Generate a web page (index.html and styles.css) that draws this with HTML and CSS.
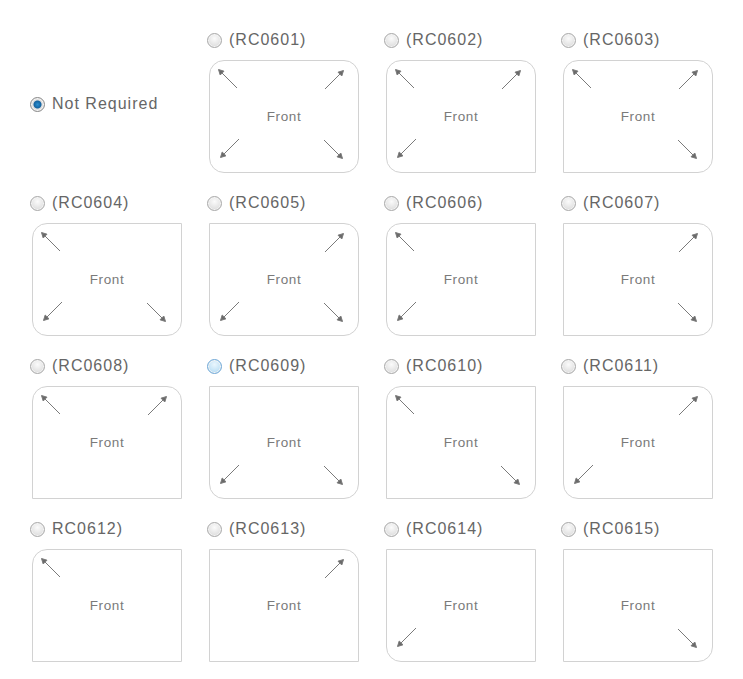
FILE: index.html
```html
<!DOCTYPE html>
<html lang="en">
<head>
    <meta charset="UTF-8">
    <title>Corner Options</title>
    <link rel="stylesheet" href="styles.css">
</head>
<body>
    <svg width="0" height="0" class="defs">
        <defs>
            <g id="arrow">
                <line x1="3" y1="3" x2="20" y2="20" />
                <polygon points="1.5,1.5 7,3.2 3.2,7" />
            </g>
        </defs>
    </svg>

    <div class="grid">
        <label class="option none">
            <input type="radio" name="corner" checked>
            <span>Not Required</span>
        </label>

        <div class="option">
            <label class="pick"><input type="radio" name="corner"><span>(RC0601)</span></label>
            <div class="card tl tr bl br">
                <svg class="arr a-tl"><use href="#arrow"/></svg>
                <svg class="arr a-tr"><use href="#arrow"/></svg>
                <svg class="arr a-bl"><use href="#arrow"/></svg>
                <svg class="arr a-br"><use href="#arrow"/></svg>
                Front
            </div>
        </div>

        <div class="option">
            <label class="pick"><input type="radio" name="corner"><span>(RC0602)</span></label>
            <div class="card tl tr bl">
                <svg class="arr a-tl"><use href="#arrow"/></svg>
                <svg class="arr a-tr"><use href="#arrow"/></svg>
                <svg class="arr a-bl"><use href="#arrow"/></svg>
                Front
            </div>
        </div>

        <div class="option">
            <label class="pick"><input type="radio" name="corner"><span>(RC0603)</span></label>
            <div class="card tl tr br">
                <svg class="arr a-tl"><use href="#arrow"/></svg>
                <svg class="arr a-tr"><use href="#arrow"/></svg>
                <svg class="arr a-br"><use href="#arrow"/></svg>
                Front
            </div>
        </div>

        <div class="option">
            <label class="pick"><input type="radio" name="corner"><span>(RC0604)</span></label>
            <div class="card tl bl br">
                <svg class="arr a-tl"><use href="#arrow"/></svg>
                <svg class="arr a-bl"><use href="#arrow"/></svg>
                <svg class="arr a-br"><use href="#arrow"/></svg>
                Front
            </div>
        </div>

        <div class="option">
            <label class="pick"><input type="radio" name="corner"><span>(RC0605)</span></label>
            <div class="card tr bl br">
                <svg class="arr a-tr"><use href="#arrow"/></svg>
                <svg class="arr a-bl"><use href="#arrow"/></svg>
                <svg class="arr a-br"><use href="#arrow"/></svg>
                Front
            </div>
        </div>

        <div class="option">
            <label class="pick"><input type="radio" name="corner"><span>(RC0606)</span></label>
            <div class="card tl bl">
                <svg class="arr a-tl"><use href="#arrow"/></svg>
                <svg class="arr a-bl"><use href="#arrow"/></svg>
                Front
            </div>
        </div>

        <div class="option">
            <label class="pick"><input type="radio" name="corner"><span>(RC0607)</span></label>
            <div class="card tr br">
                <svg class="arr a-tr"><use href="#arrow"/></svg>
                <svg class="arr a-br"><use href="#arrow"/></svg>
                Front
            </div>
        </div>

        <div class="option">
            <label class="pick"><input type="radio" name="corner"><span>(RC0608)</span></label>
            <div class="card tl tr">
                <svg class="arr a-tl"><use href="#arrow"/></svg>
                <svg class="arr a-tr"><use href="#arrow"/></svg>
                Front
            </div>
        </div>

        <div class="option">
            <label class="pick"><input type="radio" name="corner" class="hover"><span>(RC0609)</span></label>
            <div class="card bl br">
                <svg class="arr a-bl"><use href="#arrow"/></svg>
                <svg class="arr a-br"><use href="#arrow"/></svg>
                Front
            </div>
        </div>

        <div class="option">
            <label class="pick"><input type="radio" name="corner"><span>(RC0610)</span></label>
            <div class="card tl br">
                <svg class="arr a-tl"><use href="#arrow"/></svg>
                <svg class="arr a-br"><use href="#arrow"/></svg>
                Front
            </div>
        </div>

        <div class="option">
            <label class="pick"><input type="radio" name="corner"><span>(RC0611)</span></label>
            <div class="card tr bl">
                <svg class="arr a-tr"><use href="#arrow"/></svg>
                <svg class="arr a-bl"><use href="#arrow"/></svg>
                Front
            </div>
        </div>

        <div class="option">
            <label class="pick"><input type="radio" name="corner"><span>RC0612)</span></label>
            <div class="card tl">
                <svg class="arr a-tl"><use href="#arrow"/></svg>
                Front
            </div>
        </div>

        <div class="option">
            <label class="pick"><input type="radio" name="corner"><span>(RC0613)</span></label>
            <div class="card tr">
                <svg class="arr a-tr"><use href="#arrow"/></svg>
                Front
            </div>
        </div>

        <div class="option">
            <label class="pick"><input type="radio" name="corner"><span>(RC0614)</span></label>
            <div class="card bl">
                <svg class="arr a-bl"><use href="#arrow"/></svg>
                Front
            </div>
        </div>

        <div class="option">
            <label class="pick"><input type="radio" name="corner"><span>(RC0615)</span></label>
            <div class="card br">
                <svg class="arr a-br"><use href="#arrow"/></svg>
                Front
            </div>
        </div>
    </div>
</body>
</html>
```

FILE: styles.css
```css
body { margin: 0; background: #fff; font-family: "Liberation Sans", Arial, sans-serif; color: #666; }
.defs { position: absolute; }
.grid { display: grid; grid-template-columns: repeat(4, 177px); row-gap: 20px; padding: 30px 0 0 30px; }
.option { display: flex; flex-direction: column; }
.pick, .none { display: flex; flex-direction: row; align-items: center; height: 20px; cursor: pointer; font-size: 16px; letter-spacing: 1px; }
.none { height: auto; padding-top: 5px; }
.pick span, .none span { margin-left: 7px; }

input[type=radio] { appearance: none; -webkit-appearance: none; margin: 0; width: 15px; height: 15px; border-radius: 50%; border: 1px solid #a9a9a9; background: radial-gradient(circle at 50% 35%, #fbfbfb 0, #e4e4e4 60%, #d2d2d2 100%); box-shadow: inset 0 0 0 1px #f4f4f4; flex: none; }
input[type=radio]:checked { background: radial-gradient(circle at 50% 50%, #2b8fd0 0, #1463a0 3.5px, #dcdcdc 4.5px, #f0f0f0 100%); border-color: #888; }
input[type=radio].hover { background: radial-gradient(circle at 50% 35%, #eaf6fd 0, #c4e3f6 60%, #9fd0ef 100%); border-color: #6fa7d6; }

.card { position: relative; box-sizing: border-box; width: 150px; height: 113px; margin: 10px 0 0 2px; border: 1px solid #d2d2d2; display: flex; align-items: center; justify-content: center; font-size: 13.5px; letter-spacing: 0.6px; color: #7a7a7a; }
.card.tl { border-top-left-radius: 15px; }
.card.tr { border-top-right-radius: 15px; }
.card.bl { border-bottom-left-radius: 15px; }
.card.br { border-bottom-right-radius: 15px; }

.arr { position: absolute; width: 22px; height: 22px; stroke: #7a7a7a; stroke-width: 1; fill: #6a6a6a; }
.a-tl { left: 7px; top: 7px; }
.a-tr { right: 13px; top: 8px; transform: scaleX(-1); }
.a-bl { left: 9px; bottom: 13px; transform: scaleY(-1); }
.a-br { right: 14px; bottom: 12px; transform: scale(-1, -1); }
```
